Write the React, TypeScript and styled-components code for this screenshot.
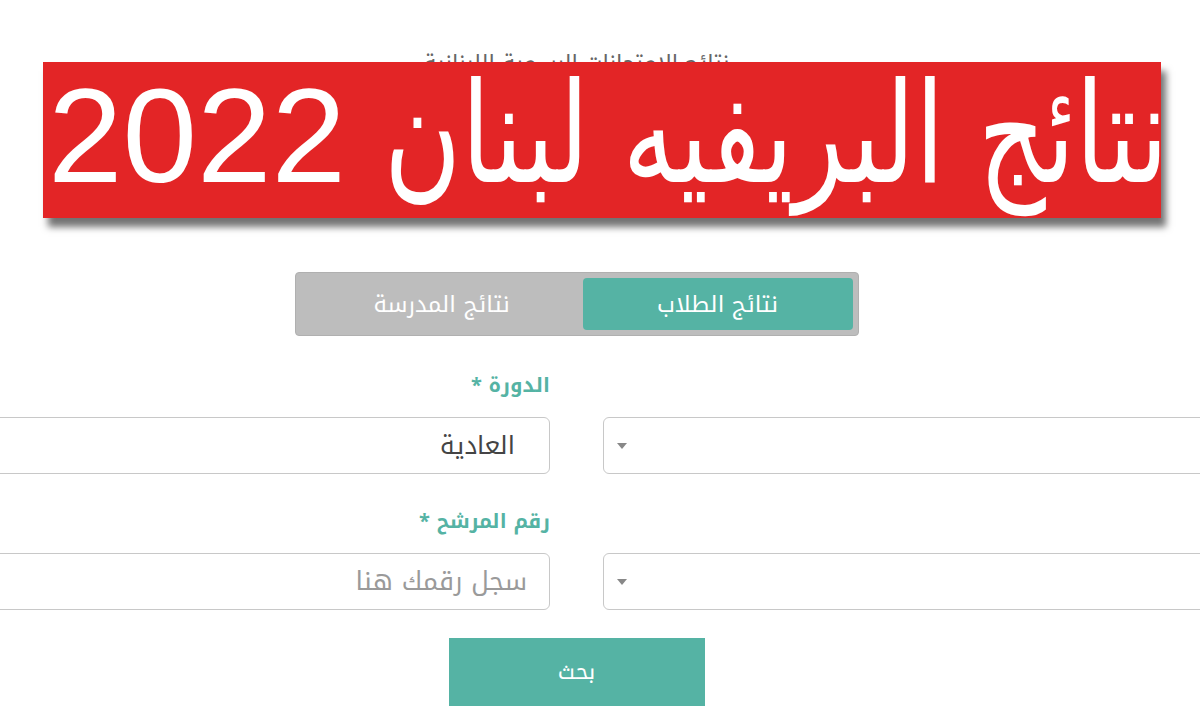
import styled, { createGlobalStyle } from 'styled-components';

const GlobalStyle = createGlobalStyle`
  html, body {
    margin: 0;
    padding: 0;
    background: #ffffff;
    overflow: hidden;
  }
  body {
    width: 1200px;
    height: 720px;
    font-family: "Noto Kufi Arabic", "Noto Sans Arabic", "DejaVu Sans", sans-serif;
  }
`;

const Page = styled.div`
  position: relative;
  width: 1200px;
  height: 720px;
  overflow: hidden;
`;

const Content = styled.div`
  width: 1267px;
  margin-left: -57px;
  margin-right: -10px;
  display: flex;
  flex-direction: column;
  align-items: center;
`;

const PageTitle = styled.h1`
  margin: 52px 0 0;
  height: 18px;
  line-height: 24px;
  font-size: 22px;
  font-weight: 400;
  color: #666;
  overflow: hidden;
`;

const Banner = styled.div`
  position: absolute;
  left: 43px;
  top: 62px;
  width: 1118px;
  height: 156px;
  background: #e32526;
  box-shadow: 5px 9px 7px rgba(0, 0, 0, 0.55);
  display: flex;
  direction: ltr;
  align-items: baseline;
  padding: 2px 0 0 5px;
  box-sizing: border-box;
  overflow: hidden;
`;

const Year = styled.span`
  font-family: "Liberation Sans", Arial, sans-serif;
  font-size: 134px;
  line-height: 1;
  color: #ffffff;
  flex: none;
`;

const BannerTitle = styled.span`
  display: inline-block;
  flex: none;
  font-family: "DejaVu Sans", sans-serif;
  font-size: 140px;
  line-height: 1;
  color: #ffffff;
  white-space: nowrap;
  margin-left: 38px;
  direction: rtl;
  transform: scaleX(0.752);
  transform-origin: left center;
`;

const Toggle = styled.div`
  margin-top: 202px;
  width: 564px;
  height: 64px;
  box-sizing: border-box;
  padding: 5px;
  background: #bdbdbd;
  border: 1px solid #b0b0b0;
  border-radius: 4px;
  display: flex;
`;

const Tab = styled.div<{ $active?: boolean }>`
  flex: ${(p) => (p.$active ? '0 0 270px' : '1')};
  display: flex;
  align-items: center;
  justify-content: center;
  border-radius: 4px;
  background: ${(p) => (p.$active ? '#55b3a4' : 'transparent')};
  color: #ffffff;
  font-size: 23px;
`;

const FormGrid = styled.div`
  margin-top: 34px;
  width: 100%;
  display: grid;
  grid-template-columns: 1fr 1fr;
  column-gap: 53px;
`;

const Field = styled.div<{ $top: number }>`
  display: flex;
  flex-direction: column;
  padding-top: ${(p) => p.$top}px;
`;

const Label = styled.label`
  height: 47px;
  font-size: 20px;
  font-weight: 700;
  color: #55b3a4;
  text-align: right;
  line-height: 30px;
`;

const Input = styled.div<{ $pad: number; $placeholder?: boolean }>`
  height: 57px;
  box-sizing: border-box;
  border: 1px solid #c8c8c8;
  border-radius: 6px;
  display: flex;
  align-items: center;
  padding-right: ${(p) => p.$pad}px;
  font-size: ${(p) => (p.$placeholder ? 26 : 25)}px;
  color: ${(p) => (p.$placeholder ? '#9a9a9a' : '#444')};
`;

const Select = styled.div`
  height: 57px;
  box-sizing: border-box;
  border: 1px solid #c8c8c8;
  border-radius: 6px;
  display: flex;
  align-items: center;
  justify-content: flex-end;
  padding-left: 13px;
`;

const Caret = styled.span`
  width: 0;
  height: 0;
  border-left: 5px solid transparent;
  border-right: 5px solid transparent;
  border-top: 6px solid #888;
`;

const SearchButton = styled.button`
  margin-top: 28px;
  width: 256px;
  height: 68px;
  border: none;
  background: #55b3a4;
  color: #ffffff;
  font-family: inherit;
  font-size: 22px;
  cursor: pointer;
`;

export default function App() {
  return (
    <Page dir="rtl">
      <GlobalStyle />
      <Content>
        <PageTitle>نتائج الامتحانات الرسمية اللبنانية</PageTitle>
        <Toggle>
          <Tab $active>نتائج الطلاب</Tab>
          <Tab>نتائج المدرسة</Tab>
        </Toggle>
        <FormGrid>
          <Field $top={47}>
            <Select>
              <Caret />
            </Select>
          </Field>
          <Field $top={0}>
            <Label>الدورة *</Label>
            <Input $pad={34}>العادية</Input>
          </Field>
          <Field $top={79}>
            <Select>
              <Caret />
            </Select>
          </Field>
          <Field $top={32}>
            <Label>رقم المرشح *</Label>
            <Input $pad={22} $placeholder>
              سجل رقمك هنا
            </Input>
          </Field>
        </FormGrid>
        <SearchButton>بحث</SearchButton>
      </Content>
      <Banner>
        <Year>2022</Year>
        <BannerTitle>نتائج البريفيه لبنان</BannerTitle>
      </Banner>
    </Page>
  );
}
